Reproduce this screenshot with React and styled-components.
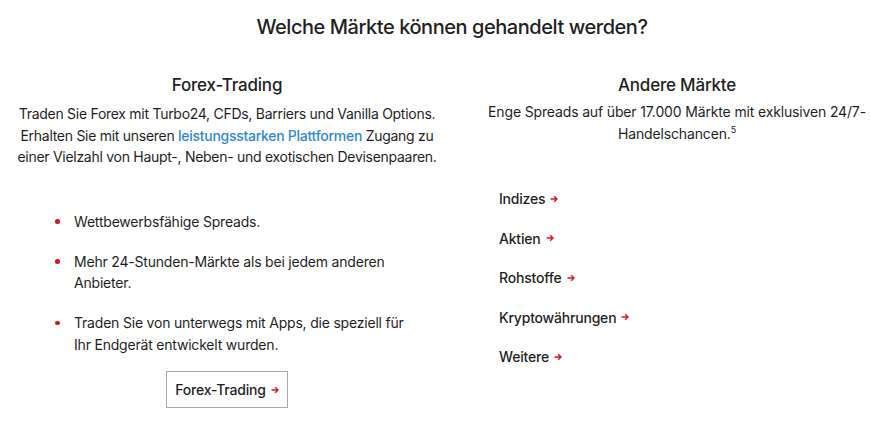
import React from "react";
import styled, { createGlobalStyle } from "styled-components";

const Global = createGlobalStyle`
  html, body { margin: 0; padding: 0; background: #fff; overflow-x: hidden; }
  body { font-family: Inter, "Noto Sans", sans-serif; color: #1f1f1f; -webkit-font-smoothing: antialiased; }
  * { box-sizing: border-box; }
`;

const Page = styled.section`
  width: 889px;
  padding: 14px 0 0 15px;
`;

const Title = styled.h2`
  margin: 0;
  text-align: center;
  font-size: 20px;
  font-weight: 500;
  line-height: 26px;
  letter-spacing: -0.45px;
`;

const Columns = styled.div`
  display: grid;
  grid-template-columns: 424px 424px;
  column-gap: 26px;
  margin-top: 34px;
`;

const Column = styled.div`
  display: flex;
  flex-direction: column;
`;

const ColTitle = styled.h3`
  margin: 0;
  text-align: center;
  font-size: 17px;
  font-weight: 500;
  line-height: 22px;
  letter-spacing: -0.2px;
`;

const Lead = styled.p`
  margin: ${(p) => p.$gap}px 0 0;
  text-align: center;
  font-size: 14px;
  line-height: 21.5px;
  font-weight: 400;
  letter-spacing: ${(p) => p.$spacing}px;
`;

const Link = styled.a`
  color: #2f88d4;
  font-weight: 500;
  text-decoration: none;
`;

const Sup = styled.sup`
  font-size: 9px;
  line-height: 0;
`;

const BulletList = styled.ul`
  list-style: none;
  margin: 43px 0 0;
  padding: 0 0 0 59px;
  display: flex;
  flex-direction: column;
  gap: 18.5px;
`;

const Bullet = styled.li`
  position: relative;
  font-size: 14px;
  line-height: 21.5px;
  letter-spacing: -0.2px;
  max-width: 345px;
  &::before {
    content: "";
    position: absolute;
    left: -19px;
    top: 8.5px;
    width: 4.5px;
    height: 4.5px;
    border-radius: 50%;
    background: #d0161b;
  }
`;

const Button = styled.a`
  align-self: center;
  margin-top: 16px;
  display: inline-flex;
  align-items: center;
  gap: 5px;
  height: 37px;
  padding: 0 8px;
  border: 1px solid #a8a8a8;
  font-size: 14px;
  font-weight: 500;
  letter-spacing: -0.2px;
  color: #1f1f1f;
  text-decoration: none;
`;

const MarketList = styled.ul`
  list-style: none;
  margin: 44px 0 0;
  padding: 0 0 0 34px;
  display: flex;
  flex-direction: column;
  gap: 18px;
`;

const Market = styled.li`
  font-size: 14px;
  font-weight: 500;
  line-height: 21.5px;
  letter-spacing: -0.2px;
  display: flex;
  align-items: center;
  gap: 5px;
`;

const Arrow = () => (
  <svg width="8" height="8" viewBox="0 0 8 8" fill="none" stroke="#e0141c" strokeWidth="1.4">
    <path d="M0.5 4H7M4.2 1.2L7 4L4.2 6.8" />
  </svg>
);

const markets = ["Indizes", "Aktien", "Rohstoffe", "Kryptowährungen", "Weitere"];

export default function App() {
  return (
    <Page>
      <Global />
      <Title>Welche Märkte können gehandelt werden?</Title>
      <Columns>
        <Column>
          <ColTitle>Forex-Trading</ColTitle>
          <Lead $gap={7} $spacing={-0.28}>
            Traden Sie Forex mit Turbo24, CFDs, Barriers und Vanilla Options. Erhalten Sie mit unseren{" "}
            <Link href="#">leistungsstarken Plattformen</Link> Zugang zu einer Vielzahl von Haupt-, Neben- und
            exotischen Devisenpaaren.
          </Lead>
          <BulletList>
            <Bullet>Wettbewerbsfähige Spreads.</Bullet>
            <Bullet>Mehr 24-Stunden-Märkte als bei jedem anderen Anbieter.</Bullet>
            <Bullet>Traden Sie von unterwegs mit Apps, die speziell für Ihr Endgerät entwickelt wurden.</Bullet>
          </BulletList>
          <Button href="#">
            Forex-Trading <Arrow />
          </Button>
        </Column>
        <Column>
          <ColTitle>Andere Märkte</ColTitle>
          <Lead $gap={5} $spacing={-0.15}>
            Enge Spreads auf über 17.000 Märkte mit exklusiven 24/7-Handelschancen.<Sup>5</Sup>
          </Lead>
          <MarketList>
            {markets.map((m) => (
              <Market key={m}>
                {m} <Arrow />
              </Market>
            ))}
          </MarketList>
        </Column>
      </Columns>
    </Page>
  );
}
